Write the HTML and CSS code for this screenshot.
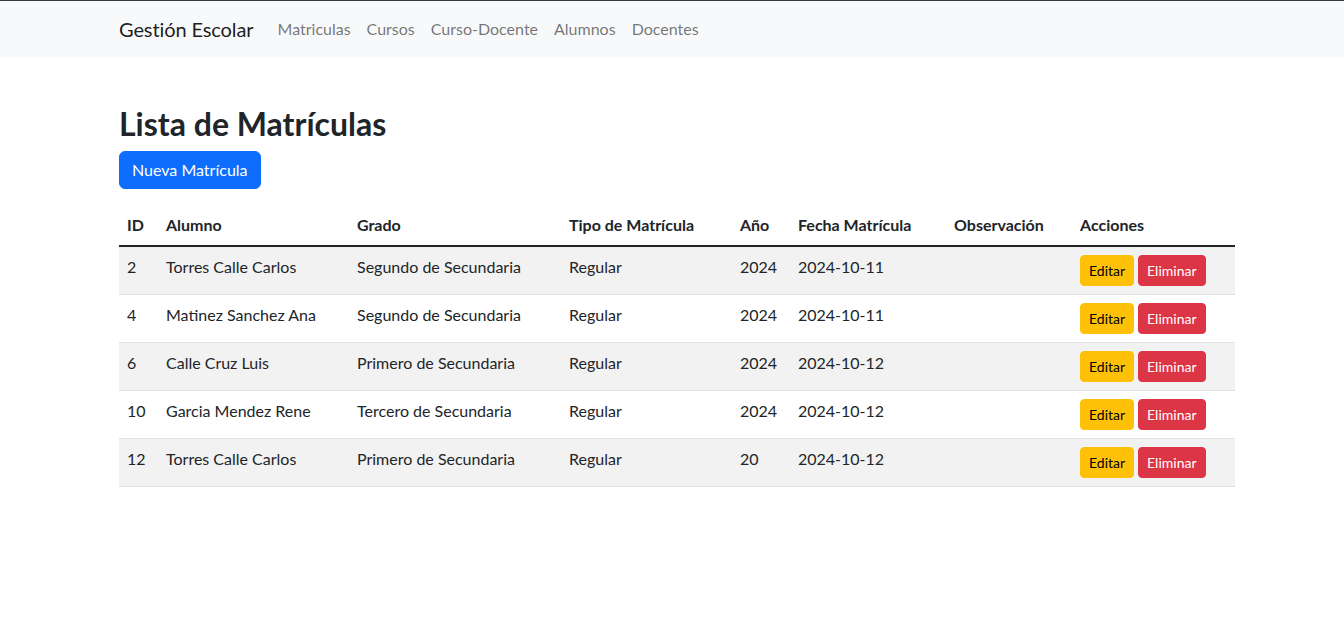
FILE: index.html
```html
<!DOCTYPE html>
<html lang="es">
<head>
<meta charset="utf-8">
<title>Gestión Escolar</title>
<link rel="stylesheet" href="styles.css">
</head>
<body>
<div class="topline"></div>
<nav class="navbar">
  <div class="container nav-inner">
    <a class="brand" href="#">Gestión Escolar</a>
    <ul class="nav-links">
      <li><a href="#">Matriculas</a></li>
      <li><a href="#">Cursos</a></li>
      <li><a href="#">Curso-Docente</a></li>
      <li><a href="#">Alumnos</a></li>
      <li><a href="#">Docentes</a></li>
    </ul>
  </div>
</nav>
<main class="container main">
  <h2 class="title">Lista de Matrículas</h2>
  <a class="btn btn-primary" href="#">Nueva Matrícula</a>
  <table class="table">
    <colgroup>
      <col class="c-id"><col class="c-alumno"><col class="c-grado"><col class="c-tipo"><col class="c-anio"><col class="c-fecha"><col class="c-obs"><col class="c-acc">
    </colgroup>
    <thead>
      <tr><th>ID</th><th>Alumno</th><th>Grado</th><th>Tipo de Matrícula</th><th>Año</th><th>Fecha Matrícula</th><th>Observación</th><th>Acciones</th></tr>
    </thead>
    <tbody>
      <tr><td>2</td><td>Torres Calle Carlos</td><td>Segundo de Secundaria</td><td>Regular</td><td>2024</td><td>2024-10-11</td><td></td><td><a class="btn btn-sm btn-warning" href="#">Editar</a><a class="btn btn-sm btn-danger" href="#">Eliminar</a></td></tr>
      <tr><td>4</td><td>Matinez Sanchez Ana</td><td>Segundo de Secundaria</td><td>Regular</td><td>2024</td><td>2024-10-11</td><td></td><td><a class="btn btn-sm btn-warning" href="#">Editar</a><a class="btn btn-sm btn-danger" href="#">Eliminar</a></td></tr>
      <tr><td>6</td><td>Calle Cruz Luis</td><td>Primero de Secundaria</td><td>Regular</td><td>2024</td><td>2024-10-12</td><td></td><td><a class="btn btn-sm btn-warning" href="#">Editar</a><a class="btn btn-sm btn-danger" href="#">Eliminar</a></td></tr>
      <tr><td>10</td><td>Garcia Mendez Rene</td><td>Tercero de Secundaria</td><td>Regular</td><td>2024</td><td>2024-10-12</td><td></td><td><a class="btn btn-sm btn-warning" href="#">Editar</a><a class="btn btn-sm btn-danger" href="#">Eliminar</a></td></tr>
      <tr><td>12</td><td>Torres Calle Carlos</td><td>Primero de Secundaria</td><td>Regular</td><td>20</td><td>2024-10-12</td><td></td><td><a class="btn btn-sm btn-warning" href="#">Editar</a><a class="btn btn-sm btn-danger" href="#">Eliminar</a></td></tr>
    </tbody>
  </table>
</main>
</body>
</html>
```
FILE: styles.css
```css
* { box-sizing: border-box; }
html, body { margin: 0; padding: 0; }
body {
  font-family: Lato, "Open Sans", "Noto Sans", sans-serif;
  font-size: 16px;
  line-height: 1.5;
  color: #212529;
  background: #fff;
}
a { text-decoration: none; }
.topline { height: 1px; background: #3a3a3a; }
.container {
  width: 1140px;
  padding: 0 12px;
  margin-left: calc(50% - 565px);
}
.navbar {
  background: #f8f9fa;
  padding: 8px 0;
}
.nav-inner { display: flex; align-items: center; }
.brand {
  font-size: 20px;
  line-height: 30px;
  padding: 5px 0;
  margin-right: 16px;
  color: rgba(0,0,0,.9);
  letter-spacing: -0.1px;
}
.nav-links { display: flex; list-style: none; margin: 0; padding: 0; }
.nav-links a {
  display: block;
  padding: 8px;
  line-height: 24px;
  color: rgba(0,0,0,.55);
}
.main { margin-top: 48px; }
.title {
  font-size: 32px;
  font-weight: 700;
  line-height: 1.2;
  margin: 0 0 8px;
}
.btn {
  display: inline-block;
  padding: 6px 12px;
  font-size: 16px;
  line-height: 24px;
  border: 1px solid transparent;
  border-radius: 6px;
  vertical-align: middle;
}
.btn-primary { background: #0d6efd; border-color: #0d6efd; color: #fff; }
.btn-sm { padding: 4px 8px; font-size: 14px; line-height: 21px; border-radius: 4px; vertical-align: top; }
.btn-warning { background: #ffc107; border-color: #ffc107; color: #000; margin-right: 4px; }
.btn-danger { background: #dc3545; border-color: #dc3545; color: #fff; }
.table {
  width: 100%;
  table-layout: fixed;
  border-collapse: collapse;
  margin-top: 16px;
}
.c-id { width: 39px; } .c-alumno { width: 191px; } .c-grado { width: 212px; } .c-tipo { width: 171px; }
.c-anio { width: 58px; } .c-fecha { width: 156px; } .c-obs { width: 126px; } .c-acc { width: 163px; }
.table th, .table td {
  padding: 8px;
  text-align: left;
  vertical-align: top;
  white-space: nowrap;
}
.table th { font-weight: 700; border-bottom: 2px solid #212529; }
.table tbody tr { border-bottom: 1px solid #dee2e6; }
.table tbody tr:nth-child(odd) { background: #f2f2f2; }
```
